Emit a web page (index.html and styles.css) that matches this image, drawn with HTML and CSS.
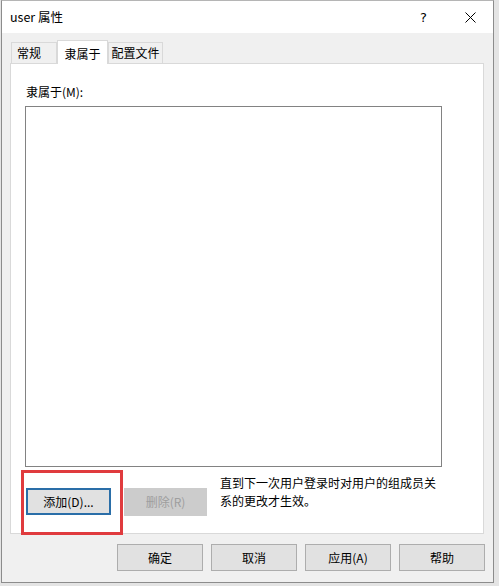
FILE: index.html
```html
<!DOCTYPE html>
<html lang="zh-CN">
<head>
<meta charset="utf-8">
<title>user 属性</title>
<link rel="stylesheet" href="styles.css">
</head>
<body>
<div class="window">
  <div class="titlebar">
    <span class="title">user 属性</span>
    <div class="caption-buttons">
      <span class="cap-btn help">?</span>
      <span class="cap-btn close">
        <svg width="11" height="11" viewBox="0 0 11 11"><path d="M0.5 0.5 L10.5 10.5 M10.5 0.5 L0.5 10.5" stroke="#000" stroke-width="1" fill="none"/></svg>
      </span>
    </div>
  </div>
  <div class="body">
    <div class="tabs">
      <div class="tab tab-general">常规</div>
      <div class="tab tab-active">隶属于</div>
      <div class="tab tab-profile">配置文件</div>
    </div>
    <div class="panel">
      <div class="label">隶属于(M):</div>
      <div class="listbox"></div>
      <div class="action-row">
        <button class="btn btn-add">添加(D)...</button>
        <button class="btn btn-disabled">删除(R)</button>
        <div class="note">直到下一次用户登录时对用户的组成员关系的更改才生效。</div>
      </div>
      <div class="highlight"></div>
    </div>
    <div class="footer">
      <button class="btn btn-foot">确定</button>
      <button class="btn btn-foot">取消</button>
      <button class="btn btn-foot">应用(A)</button>
      <button class="btn btn-foot">帮助</button>
    </div>
  </div>
</div>
</body>
</html>
```

FILE: styles.css
```css
* { box-sizing: border-box; }
html, body {
  margin: 0;
  padding: 0;
}
body {
  background: #e4e4e4;
  width: 499px;
  height: 586px;
  overflow: hidden;
  font-family: "Noto Sans CJK SC", "Noto Sans", sans-serif;
  font-size: 12px;
  color: #000;
}
.window {
  margin-left: 1px;
  width: 493px;
  height: 583px;
  border: 1px solid #8c8c8c;
  border-top-color: #b5b5b5;
  background: #f0f0f0;
  display: flex;
  flex-direction: column;
}
.titlebar {
  height: 32px;
  background: #fff;
  display: flex;
  align-items: center;
  justify-content: space-between;
  padding-left: 8px;
  flex: none;
}
.title {
  font-size: 12.5px;
  line-height: 16px;
}
.caption-buttons {
  display: flex;
  height: 32px;
}
.cap-btn {
  width: 45px;
  height: 32px;
  display: flex;
  align-items: center;
  justify-content: center;
}
.help {
  font-family: "DejaVu Sans", sans-serif;
  font-size: 13px;
  padding-right: 2px;
}
.close {
  width: 46px;
}
.body {
  flex: 1;
  padding: 7px 8px 0 8px;
}
.tabs {
  height: 23px;
  display: flex;
  align-items: flex-end;
  padding-left: 1px;
}
.tab {
  height: 21px;
  border: 1px solid #d9d9d9;
  border-bottom: none;
  background: #f0f0f0;
  line-height: 20px;
  font-size: 12px;
}
.tab-general {
  width: 46px;
  padding-left: 5px;
}
.tab-active {
  width: 51px;
  height: 24px;
  margin-bottom: -1px;
  background: #fff;
  text-align: center;
  line-height: 26px;
  position: relative;
  z-index: 1;
  border-color: #d9d9d9;
}
.tab-profile {
  width: 55px;
  text-align: center;
  margin-left: 0;
}
.panel {
  position: relative;
  width: 474px;
  height: 471px;
  background: #fff;
  border: 1px solid #d9d9d9;
  padding: 20px 0 0 15px;
}
.label {
  line-height: 16px;
}
.listbox {
  margin-top: 6px;
  margin-left: -1px;
  width: 417px;
  height: 361px;
  border: 1px solid #828282;
  background: #fff;
}
.action-row {
  margin-top: 7px;
  display: flex;
  align-items: flex-start;
}
.btn {
  font-family: "Noto Sans CJK SC", "Noto Sans", sans-serif;
  font-size: 12px;
  color: #000;
  height: 27px;
  padding: 0;
  border: 1px solid #adadad;
  background: #e1e1e1;
  line-height: 24px;
}
.btn-add {
  margin-top: 14px;
  width: 85px;
  border: 2px solid #2a6ea8;
}
.btn-disabled {
  margin-top: 14px;
  margin-left: 13px;
  width: 83px;
  height: 28px;
  border-color: #cccccc;
  background: #cccccc;
  color: #9e9e9e;
}
.note {
  margin-left: 13px;
  width: 220px;
  line-height: 17.5px;
}
.highlight {
  position: absolute;
  left: 10px;
  top: 406px;
  width: 102px;
  height: 65px;
  border: 3px solid #e03b3e;
}
.footer {
  margin-top: 10px;
  display: flex;
  justify-content: flex-end;
  gap: 8px;
}
.btn-foot {
  width: 86px;
}
```
